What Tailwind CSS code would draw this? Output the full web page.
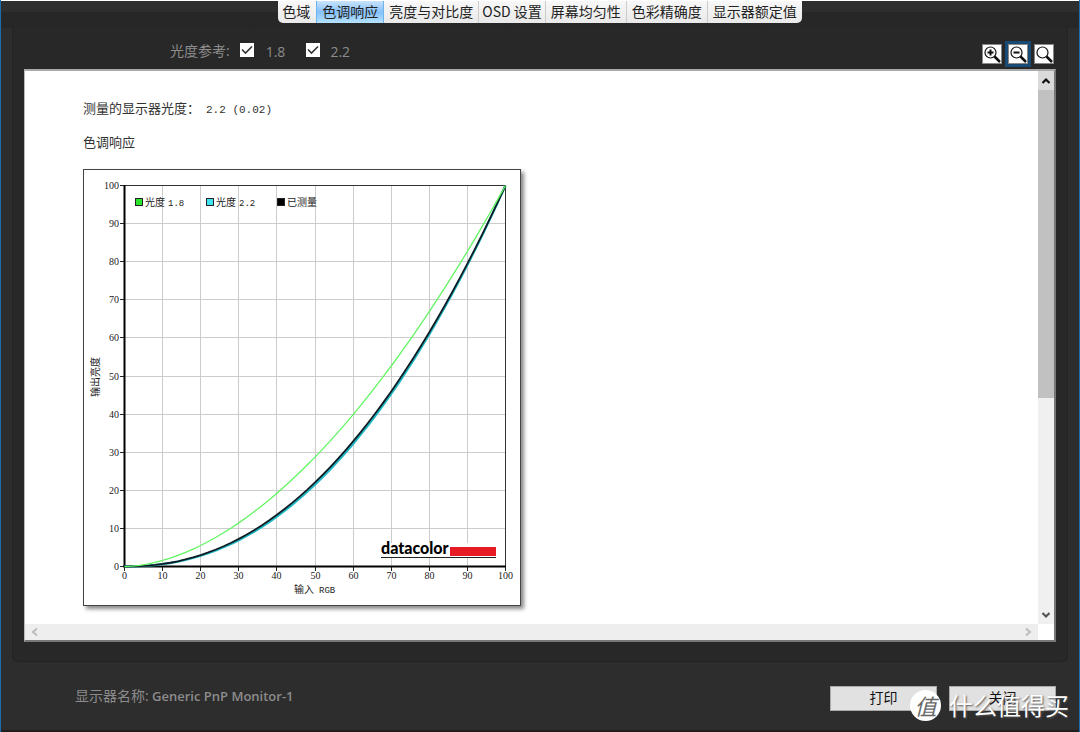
<!DOCTYPE html>
<html lang="zh-CN">
<head>
<meta charset="utf-8">
<meta name="viewport" content="width=device-width, initial-scale=1">
<title>色调响应</title>
<script src="https://cdn.jsdelivr.net/npm/@tailwindcss/browser@4"></script>
</head>
<body class="relative flex min-h-screen flex-col border-x border-x-[#1c6cb0] bg-[#2d2d2d] font-['Open_Sans','Noto_Sans_CJK_SC',sans-serif] text-sm text-[#8c8c8c]">

<header class="flex h-7 flex-none justify-center border-t border-white bg-linear-to-b from-[#2e2e2e] from-40% to-[#272727] to-40%">
  <nav class="flex h-[22px] overflow-hidden rounded-b-[5px] bg-linear-to-b from-[#f8f8f8] to-[#e9e9e9] font-['Noto_Sans_CJK_SC',sans-serif] leading-5 whitespace-nowrap text-[#222]" role="tablist">
    <button role="tab" class="pr-1.5 pb-0.5 pl-1">色域</button>
    <button role="tab" aria-selected="true" class="border-x border-[#6db3ee] bg-linear-to-b from-[#c9e3fb] via-[#86c1f8] to-[#b5e2ff] px-[5px] pb-0.5">色调响应</button>
    <button role="tab" class="px-[5px] pb-0.5">亮度与对比度</button>
    <button role="tab" class="border-l border-[#ccc] px-[3px] pb-0.5">OSD 设置</button>
    <button role="tab" class="border-l border-[#ccc] px-[5px] pb-0.5">屏幕均匀性</button>
    <button role="tab" class="border-l border-[#ccc] px-[5px] pb-0.5">色彩精确度</button>
    <button role="tab" class="border-l border-[#ccc] px-[5px] pb-0.5">显示器额定值</button>
  </nav>
</header>

<main class="mx-[11px] flex flex-1 flex-col rounded-b-md border border-t-0 border-[#232323] bg-[#282828] px-[11px] pb-[19px]">
  <div class="flex h-[41px] flex-none items-center justify-between pt-1 pl-[146px]">
    <div class="flex items-center">
      <span class="mr-1.5 text-sm">光度参考:</span>
      <span class="mb-0.5 ml-1 grid size-[14px]">
        <input id="g18" type="checkbox" checked class="peer col-start-1 row-start-1 size-[14px] appearance-none bg-white">
        <svg class="pointer-events-none invisible col-start-1 row-start-1 size-[14px] peer-checked:visible" viewBox="0 0 14 14" fill="none" stroke="#333" stroke-width="1.600"><path d="M2 6.500l3.500 3.500L12 3.500"/></svg>
      </span>
      <label for="g18" class="ml-3 pt-0.5">1.8</label>
      <span class="mb-0.5 ml-[21px] grid size-[14px]">
        <input id="g22" type="checkbox" checked class="peer col-start-1 row-start-1 size-[14px] appearance-none bg-white">
        <svg class="pointer-events-none invisible col-start-1 row-start-1 size-[14px] peer-checked:visible" viewBox="0 0 14 14" fill="none" stroke="#333" stroke-width="1.600"><path d="M2 6.500l3.500 3.500L12 3.500"/></svg>
      </span>
      <label for="g22" class="ml-2.5 pt-0.5">2.2</label>
    </div>
    <div class="mt-1.5 mr-0.5 flex gap-1.5">
      <button aria-label="放大" class="size-5 border border-[#888] bg-white">
        <svg viewBox="0 0 18 18" fill="none" stroke="#111"><circle cx="7.5" cy="7.5" r="5.5" stroke-width="1.2"/><path d="M11.5 11.5l5.500 5.500" stroke-width="2.500"/><path d="M4.500 7.500h6M7.500 4.500v6" stroke-width="2"/></svg>
      </button>
      <button aria-label="缩小" class="size-5 border border-[#888] bg-white outline-3 outline-[#194a73]">
        <svg viewBox="0 0 18 18" fill="none" stroke="#111"><circle cx="7.5" cy="7.5" r="5.5" stroke-width="1.2"/><path d="M11.5 11.5l5.500 5.500" stroke-width="2.500"/><path d="M4.500 7.500h6" stroke-width="2"/></svg>
      </button>
      <button aria-label="原始大小" class="size-5 border border-[#888] bg-white">
        <svg viewBox="0 0 18 18" fill="none" stroke="#111"><circle cx="7.5" cy="7.5" r="5.5" stroke-width="1.2"/><path d="M11.5 11.5l5.500 5.500" stroke-width="2.500"/></svg>
      </button>
    </div>
  </div>

  <section class="grid flex-1 grid-cols-[1fr_16px] grid-rows-[1fr_16px] border-2 border-l border-[#777] border-t-[#aaa] border-l-[#bbb] bg-white">
    <div class="px-[58px] pt-[27px] pb-4 font-['Noto_Sans_CJK_SC',sans-serif] text-[13px] leading-5 text-[#333]">
      <p>测量的显示器光度：<span class="ml-1.5 font-['Liberation_Mono',monospace] text-[11px]">2.2 (0.02)</span></p>
      <p class="mt-3">色调响应</p>
      <div class="mt-[17px] w-[438px] max-w-full border border-[#444] bg-white shadow-[3px_3px_4px_#0007]">
        <svg viewBox="0 0 436 435" class="block w-full font-['Liberation_Serif','Noto_Sans_CJK_SC',serif] text-[10px]" fill="#222">
          <g id="grid"></g>
          <path d="M40 15.500h381.500V396" fill="none" stroke="#333"/>
          <path d="M40.500 15v382M39 396.500h383" fill="none" stroke="#000" stroke-width="2"/>
          <g id="curves" fill="none"></g>
          <g stroke="#222">
            <rect x="51.500" y="28.500" width="7" height="7" fill="#29e62c"/>
            <rect x="122.500" y="28.500" width="7" height="7" fill="#3fe3f2"/>
            <rect x="193.500" y="28.500" width="7" height="7" fill="#000"/>
          </g>
          <text x="61" y="36" font-family="Noto Sans CJK SC">光度</text>
          <text x="84" y="36" font-family="Liberation Mono" font-size="9">1.8</text>
          <text x="132" y="36" font-family="Noto Sans CJK SC">光度</text>
          <text x="155" y="36" font-family="Liberation Mono" font-size="9">2.2</text>
          <text x="203" y="36" font-family="Noto Sans CJK SC">已测量</text>
          <text x="210" y="423" font-family="Noto Sans CJK SC">输入</text>
          <text x="235" y="423" font-family="Liberation Mono" font-size="9">RGB</text>
          <text transform="translate(15 207) rotate(-90)" text-anchor="middle" font-family="Noto Sans CJK SC">输出亮度</text>
          <rect x="297" y="373" width="116" height="15" fill="#fff"/>
          <text x="297" y="384" font-family="Lato, Open Sans" font-size="16" font-weight="900" fill="#000">datacolor</text>
          <rect x="366" y="377" width="46" height="9" fill="#e71b23"/>
          <path d="M297 387.500h115" stroke="#222" stroke-width="1"/>
        </svg>
      </div>
    </div>
    <div class="flex flex-col bg-[#f0f0f0]">
      <button aria-label="向上滚动" class="flex h-[19px] items-center justify-center bg-[#dadada]"><svg width="10" height="8" viewBox="0 0 10 8" fill="none" stroke="#111" stroke-width="2.200"><path d="M1.500 6L5 2.500 8.500 6"/></svg></button>
      <div class="h-[308px] bg-[#c1c1c1]"></div>
      <button aria-label="向下滚动" class="mt-auto flex h-[18px] items-center justify-center"><svg width="10" height="8" viewBox="0 0 10 8" fill="none" stroke="#555" stroke-width="2.200"><path d="M1.500 2L5 5.500 8.500 2"/></svg></button>
    </div>
    <div class="flex items-center justify-between bg-[#eee] px-1.5">
      <button aria-label="向左滚动"><svg width="7" height="10" viewBox="0 0 7 10" fill="none" stroke="#bbb" stroke-width="2"><path d="M6 1.500L2 5l4 3.500"/></svg></button>
      <button aria-label="向右滚动"><svg width="7" height="10" viewBox="0 0 7 10" fill="none" stroke="#bbb" stroke-width="2"><path d="M1 1.500L5 5l-4 3.500"/></svg></button>
    </div>
  </section>
</main>

<footer class="flex h-[70px] flex-none items-center justify-between border-b-2 border-[#231c1e] pr-[23px] pl-[74px]">
  <p class="text-[13px]"><span class="text-sm">显示器名称:</span> <span class="font-semibold">Generic PnP Monitor-1</span></p>
  <div class="mt-1 flex gap-3">
    <button class="h-[25px] w-[107px] border border-[#aaa] bg-[#e1e1e1] leading-5 text-[#111]">打印</button>
    <button class="h-[25px] w-[107px] border border-[#aaa] bg-[#e1e1e1] leading-5 text-[#111]">关闭</button>
  </div>
</footer>

<div class="pointer-events-none absolute right-2.5 bottom-[11px] flex items-center gap-2 font-['Noto_Sans_CJK_SC',sans-serif] text-white">
  <span class="flex size-[31px] items-center justify-center rounded-full bg-white text-[22px] leading-none text-[#666] italic">值</span>
  <span class="text-2xl leading-8 whitespace-nowrap [text-shadow:1px_1px_2px_#555]">什么值得买</span>
</div>

<script>
  const left = 40.5, bottom = 396.5, size = 381;
  const px = v => left + v * size, py = v => bottom - v * size;
  let grid = '';
  for (let i = 0; i <= 10; i++) {
    const x = Math.floor(px(i / 10)) + 0.5, y = Math.floor(py(i / 10)) + 0.5;
    if (i > 0 && i < 10) grid += `<path d="M${x} 16V396M41 ${y}H421" stroke="#ccc"/>`;
    grid += `<path d="M${x} 396v5M36 ${y}h5" stroke="#222"/>`;
    grid += `<text x="${x}" y="409" text-anchor="middle">${i * 10}</text>`;
    grid += `<text x="35" y="${y + 3}" text-anchor="end">${i * 10}</text>`;
  }
  document.getElementById('grid').innerHTML = grid;
  const curve = g => Array.from({length: 51}, (_, i) => `${px(i / 50)},${py(Math.pow(i / 50, g))}`).join(' ');
  document.getElementById('curves').innerHTML =
    `<polyline points="${curve(2.22)}" stroke="#20b9c5" stroke-width="2.200"/>` +
    `<polyline points="${curve(2.18)}" stroke="#101c24" stroke-width="1.800"/>` +
    `<polyline points="${curve(1.8)}" stroke="#62f562" stroke-width="1.300"/>`;
</script>
</body>
</html>
